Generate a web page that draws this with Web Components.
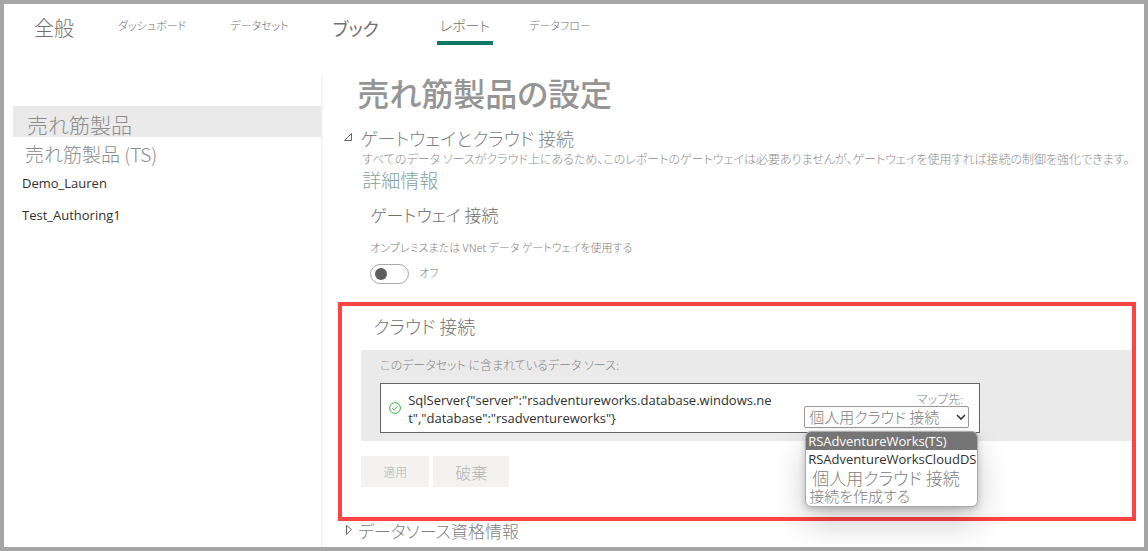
<!DOCTYPE html>
<html lang="ja">
<head>
<meta charset="utf-8">
<meta name="viewport" content="width=device-width, initial-scale=1">
<title>売れ筋製品の設定</title>
<style>
  :root {
    --jp: "Noto Sans CJK JP", sans-serif;
    --latin: "Open Sans", "Noto Sans CJK JP", sans-serif;
    --muted: #808080;
    --panel: #eaeaea;
    --accent: #117865;
  }
  body { margin: 0; font-family: var(--jp); font-weight: 300; font-feature-settings: "palt"; color: var(--muted); background: #fff; }
</style>
</head>
<body>
<settings-page>
  <tab-bar slot="tabs">
    <tab-link size="large">全般</tab-link>
    <tab-link>ダッシュボード</tab-link>
    <tab-link>データセット</tab-link>
    <tab-link size="large" strong>ブック</tab-link>
    <tab-link size="medium" current>レポート</tab-link>
    <tab-link>データフロー</tab-link>
  </tab-bar>
  <side-nav slot="side">
    <side-item current>売れ筋製品</side-item>
    <side-item>売れ筋製品 (TS)</side-item>
    <side-item latin>Demo_Lauren</side-item>
    <side-item latin>Test_Authoring1</side-item>
  </side-nav>
  <span slot="title">売れ筋製品の設定</span>
  <settings-section open>
    <span slot="heading">ゲートウェイとクラウド 接続</span>
    <gateway-settings></gateway-settings>
    <cloud-connections>
      <data-source>
        SqlServer{"server":"rsadventureworks.database.windows.net","database":"rsadventureworks"}
        <connection-picker slot="picker"></connection-picker>
      </data-source>
      <action-button slot="actions">適用</action-button>
      <action-button slot="actions" size="large">破棄</action-button>
    </cloud-connections>
  </settings-section>
  <settings-section>
    <span slot="heading">データソース資格情報</span>
  </settings-section>
</settings-page>

<script>
const define = (name, html, setup) => {
  const template = document.createElement('template');
  template.innerHTML = html;
  customElements.define(name, class extends HTMLElement {
    constructor() {
      super();
      this.attachShadow({ mode: 'open' }).append(template.content.cloneNode(true));
    }
    connectedCallback() { if (setup) setup(this, this.shadowRoot); }
  });
};

define('settings-page', `
  <style>
    :host { display: flex; flex-direction: column; box-sizing: border-box; min-height: 100vh; border: 4px solid #a5a5a5; }
    .body { flex: 1; display: grid; grid-template-columns: 28% minmax(0, 1fr); }
    aside { border-right: 2px solid #f4f4f4; padding: 30px 0 0 9px; }
    main { padding-left: 19px; }
    h1 { margin: 0; padding-left: 15px; font-size: 32px; line-height: 32px; height: 51px; font-weight: 500; color: #959595; }
  </style>
  <header><slot name="tabs"></slot></header>
  <div class="body">
    <aside><slot name="side"></slot></aside>
    <main><h1><slot name="title"></slot></h1><slot></slot></main>
  </div>`);

define('tab-bar', `
  <style>
    :host { display: block; }
    nav { display: flex; gap: 44px; height: 72px; padding-left: 30px; box-sizing: border-box; white-space: nowrap; }
  </style>
  <nav><slot></slot></nav>`);

define('tab-link', `
  <style>
    :host { display: block; font-size: 11px; line-height: 42px; }
    :host([size=large]) { font-size: 20px; line-height: 48px; }
    :host([size=medium]) { font-size: 14px; line-height: 42px; margin: 0 -8px 0 14px; }
    :host([strong]) { font-size: 18px; font-weight: 400; }
    a { display: block; box-sizing: border-box; color: #707070; text-decoration: none; }
    :host([current]) a { height: 41px; padding: 0 3px; border-bottom: 4px solid var(--accent); }
  </style>
  <a href="#"><slot></slot></a>`,
  (el, root) => { if (el.hasAttribute('current')) root.querySelector('a').setAttribute('aria-current', 'page'); });

define('side-nav', `
  <style>:host { display: block; } nav { display: flex; flex-direction: column; }</style>
  <nav><slot></slot></nav>`);

define('side-item', `
  <style>
    :host { display: block; font-size: 19px; line-height: 34px; }
    :host([current]) { font-size: 21px; line-height: 36px; }
    :host([latin]) { font-family: var(--latin); font-size: 13px; line-height: 30px; font-weight: 400; }
    a { display: block; height: 31px; padding: 0 12px; color: #8c8c8c; text-decoration: none; }
    :host([current]) a { padding: 0 14px; background: var(--panel); }
    :host([latin]) a { height: 32px; padding: 0 9px; color: #303030; }
  </style>
  <a href="#"><slot></slot></a>`);

define('settings-section', `
  <style>
    :host { display: block; }
    h2 { margin: 0; font: inherit; font-size: 18px; line-height: 22px; }
    button { display: flex; align-items: center; gap: 6px; padding: 0; border: 0; background: none; font: inherit; color: inherit; font-feature-settings: inherit; }
    svg { width: 12px; height: 12px; fill: #fff; stroke: #666; stroke-width: 1; }
    .expanded { display: none; }
    :host([open]) .expanded { display: block; }
    :host([open]) .collapsed, :host(:not([open])) .content { display: none; }
    :host(:not([open])) h2 { font-size: 17px; line-height: 20px; }
    :host(:not([open])) button { gap: 4px; }
  </style>
  <h2><button type="button">
    <svg class="expanded" viewBox="0 0 12 12"><path d="M2.500 8.500 9.500 1.500V8.500Z"/></svg>
    <svg class="collapsed" viewBox="0 0 12 12"><path d="M4.500 .5 9.500 4.500 4.500 9.500Z"/></svg>
    <slot name="heading"></slot>
  </button></h2>
  <div class="content"><slot></slot></div>`,
  (el, root) => {
    const button = root.querySelector('button');
    button.setAttribute('aria-expanded', el.hasAttribute('open'));
    button.onclick = () => button.setAttribute('aria-expanded', el.toggleAttribute('open'));
  });

define('gateway-settings', `
  <style>
    :host { display: block; padding-left: 20px; font-size: 12px; line-height: 20px; }
    p { margin: 0; color: #8c8c8c; white-space: nowrap; }
    .more { display: block; width: max-content; font-size: 19px; line-height: 22px; color: #7fa39b; text-decoration: none; }
    section { padding: 12px 0 18px 8px; }
    h3 { margin: 0 0 10px; font: inherit; font-size: 17px; line-height: 24px; color: #707070; }
  </style>
  <p>すべてのデータ ソースがクラウド上にあるため、このレポートのゲートウェイは必要ありませんが、ゲートウェイを使用すれば接続の制御を強化できます。</p>
  <a class="more" href="#">詳細情報</a>
  <section>
    <h3>ゲートウェイ 接続</h3>
    <toggle-switch>オンプレミスまたは VNet データ ゲートウェイを使用する</toggle-switch>
  </section>`);

define('toggle-switch', `
  <style>
    :host { display: block; font-size: 11px; line-height: 20px; }
    label { display: block; margin-bottom: 7px; }
    .row { display: flex; gap: 10px; }
    input { appearance: none; display: flex; align-items: center; box-sizing: border-box; width: 39px; height: 20px; margin: 0; padding: 0 4px; border: 1px solid #aaa; border-radius: 10px; background: #fff; }
    input::before { content: ""; width: 12px; height: 12px; border-radius: 50%; background: #5f5d5b; }
    input:checked { justify-content: flex-end; }
    output { line-height: 16px; }
  </style>
  <label for="switch"><slot></slot></label>
  <div class="row"><input id="switch" type="checkbox" role="switch"><output for="switch">オフ</output></div>`,
  (el, root) => {
    const input = root.querySelector('input');
    input.onchange = () => { root.querySelector('output').textContent = input.checked ? 'オン' : 'オフ'; };
  });

define('cloud-connections', `
  <style>
    :host { display: block; margin: 0 8px 0 -4px; border: 4px solid #ff4343; }
    h3 { margin: 0; padding: 8px 0 0 31px; font: inherit; font-size: 18px; line-height: 24px; height: 36px; color: #707070; }
    .panel { margin-left: 19px; padding: 6px 19px 8px; background: var(--panel); font-size: 12px; }
    p { margin: 0; line-height: 18px; padding-bottom: 9px; color: #858585; }
    .actions { display: flex; gap: 4px; padding: 15px 19px 30px; }
  </style>
  <h3>クラウド 接続</h3>
  <div class="panel"><p>このデータセット に含まれているデータ ソース:</p><slot></slot></div>
  <div class="actions"><slot name="actions"></slot></div>`);

define('data-source', `
  <style>
    :host { display: flex; justify-content: space-between; box-sizing: border-box; max-width: 600px; height: 50px; border: 1px solid #666; background: #fff; padding: 7px 10px 0 8px; }
    .name { display: flex; align-items: flex-start; gap: 7px; font-family: var(--latin); font-size: 13px; line-height: 18px; font-weight: 400; color: #303030; }
    .text { width: 366px; word-break: break-all; }
    svg { flex: none; width: 12px; height: 12px; margin-top: 11px; fill: none; stroke: #3fb83f; }
  </style>
  <div class="name">
    <svg viewBox="0 0 12 12" role="img" aria-label="OK"><circle cx="6" cy="6" r="5.400"/><path d="m3.300 6.200 1.900 1.900 3.600-3.800"/></svg>
    <div class="text"><slot></slot></div>
  </div>
  <slot name="picker"></slot>`);

define('connection-picker', `
  <style>
    :host { display: flex; flex-direction: column; align-items: stretch; position: relative; width: 165px; font-size: 12px; line-height: 15px; }
    label { text-align: right; padding-right: 6px; }
    .field { display: grid; align-items: center; }
    select { grid-area: 1 / 1; appearance: none; box-sizing: border-box; width: 100%; height: 22px; padding: 0 4px; border: 1px solid #999; border-radius: 2px; background: #fff; font: inherit; font-size: 15px; line-height: 20px; font-feature-settings: inherit; color: inherit; }
    svg { grid-area: 1 / 1; justify-self: end; width: 10px; height: 6px; margin-right: 3px; fill: none; stroke: #333; stroke-width: 1.600; pointer-events: none; }
    ul { position: absolute; top: 40px; left: 1px; z-index: 1; box-sizing: border-box; width: 173px; margin: 0; padding: 0 0 1px; list-style: none; border: 1px solid #aaa; border-radius: 6px; overflow: hidden; background: #fff; box-shadow: 0 16px 32px #0003, 0 2px 6px #0003; white-space: nowrap; }
    li { padding: 0 3px; font-size: 15px; line-height: 18px; }
    li.latin { padding: 0 2px; font-family: var(--latin); font-size: 13px; font-weight: 400; color: #303030; }
    li[aria-selected=true] { background: #757575; color: #fff; }
    li[aria-selected=true].latin { color: #fff; }
    li.personal { padding: 1px 6px 0; font-size: 17px; }
  </style>
  <label for="connection">マップ先:</label>
  <div class="field">
    <select id="connection"><option>個人用クラウド 接続</option></select>
    <svg viewBox="0 0 10 6"><path d="m1 1 4 4 4-4"/></svg>
  </div>
  <ul role="listbox" aria-label="マップ先">
    <li class="latin" role="option" aria-selected="true">RSAdventureWorks(TS)</li>
    <li class="latin" role="option">RSAdventureWorksCloudDS</li>
    <li class="personal" role="option">個人用クラウド 接続</li>
    <li role="option">接続を作成する</li>
  </ul>`);

define('action-button', `
  <style>
    :host { display: block; font-size: 12px; }
    :host([size=large]) { font-size: 16px; }
    button { display: block; height: 31px; padding: 0 22px; border: 0; background: #f3f2f1; color: #b5b3b1; font: inherit; }
  </style>
  <button type="button" disabled><slot></slot></button>`);
</script>
</body>
</html>
